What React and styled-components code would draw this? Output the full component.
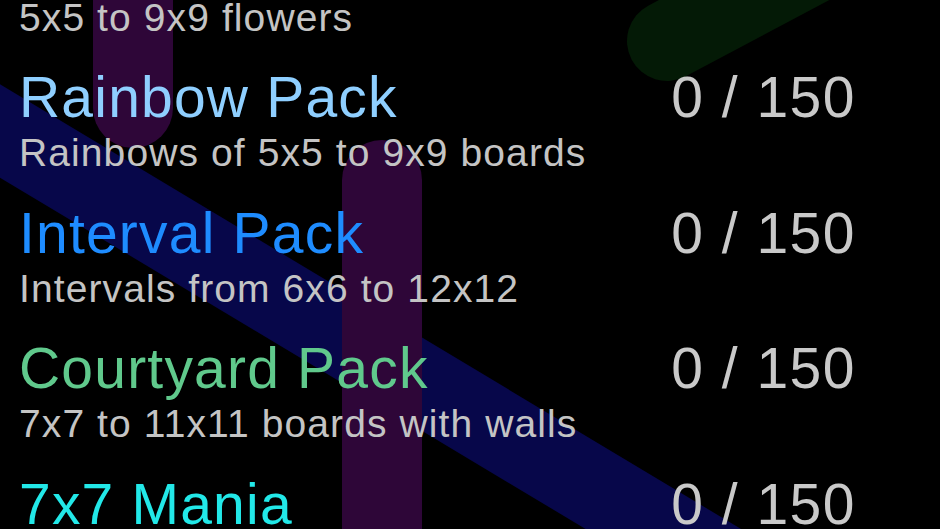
//IMPORTS
import React from 'react'
import styled, { createGlobalStyle } from 'styled-components'


//STYLES
const GlobalStyle = createGlobalStyle`
  html, body {
    margin: 0;
    padding: 0;
    background: #000;
    overflow: hidden;
  }
`

const Screen = styled.div`
  position: relative;
  width: 940px;
  height: 529px;
  overflow: hidden;
  background: #000;
  font-family: 'Liberation Sans', Arial, Helvetica, sans-serif;
`

const Backdrop = styled.svg`
  position: absolute;
  inset: 0;
  z-index: 0;
`

const List = styled.div`
  position: relative;
  z-index: 1;
  display: flex;
  flex-direction: column;
`

const Row = styled.div`
  display: flex;
  justify-content: space-between;
  align-items: flex-start;
  padding: 25.3px 84px 0 19px;
`

const Info = styled.div`
  display: flex;
  flex-direction: column;
  gap: 2.2px;
`

const Title = styled.div`
  font-size: 57px;
  line-height: 64px;
  letter-spacing: 1.2px;
  color: ${props => props.color};
  white-space: nowrap;
`

const Subtitle = styled.div`
  font-size: 39px;
  line-height: 44px;
  letter-spacing: 1.1px;
  color: #c4c4c4;
  white-space: nowrap;
`

const CutSubtitle = styled(Subtitle)`
  margin: -4px 0 0 19px;
`

const Count = styled.div`
  font-size: 57px;
  line-height: 64px;
  letter-spacing: 1.5px;
  color: #c9c9c9;
  white-space: nowrap;
`


//DATA
const packs = [
  { title: 'Rainbow Pack', sub: 'Rainbows of 5x5 to 9x9 boards', color: '#8fcfff' },
  { title: 'Interval Pack', sub: 'Intervals from 6x6 to 12x12', color: '#1e8cff' },
  { title: 'Courtyard Pack', sub: '7x7 to 11x11 boards with walls', color: '#60c98c' },
  { title: '7x7 Mania', sub: '', color: '#22e8e8' },
]


//MAIN COMPONENT
function App() {
  return (
    <Screen>
      <GlobalStyle />
      <Backdrop width="940" height="529" viewBox="0 0 940 529">
        <g fill="none" strokeWidth="80" strokeLinecap="round">
          <line x1="-200" y1="11" x2="1100" y2="791" stroke="#07074a" />
          <line x1="133" y1="-200" x2="133" y2="108" stroke="#2e0638" />
          <line x1="382" y1="180" x2="382" y2="800" stroke="#2e0638" />
          <line x1="667" y1="41" x2="1000" y2="-136" stroke="#041a06" />
        </g>
      </Backdrop>
      <List>
        <CutSubtitle>5x5 to 9x9 flowers</CutSubtitle>
        {packs.map(p => (
          <Row key={p.title}>
            <Info>
              <Title color={p.color}>{p.title}</Title>
              {p.sub && <Subtitle>{p.sub}</Subtitle>}
            </Info>
            <Count>0 / 150</Count>
          </Row>
        ))}
      </List>
    </Screen>
  )
}
export default App
